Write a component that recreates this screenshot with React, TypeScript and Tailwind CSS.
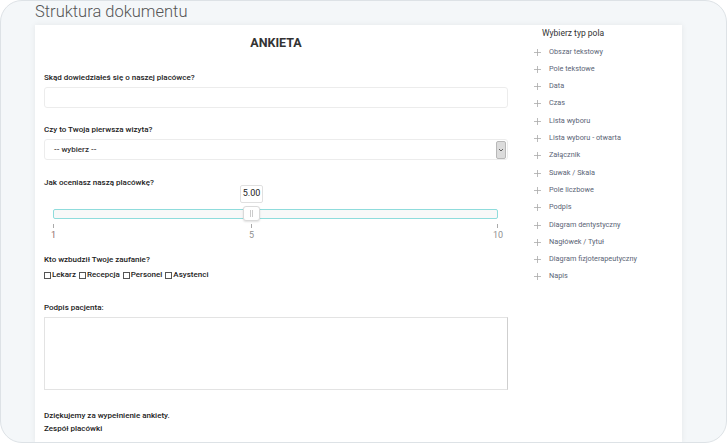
import React from "react";

const items = [
  "Obszar tekstowy",
  "Pole tekstowe",
  "Data",
  "Czas",
  "Lista wyboru",
  "Lista wyboru - otwarta",
  "Załącznik",
  "Suwak / Skala",
  "Pole liczbowe",
  "Podpis",
  "Diagram dentystyczny",
  "Nagłówek / Tytuł",
  "Diagram fizjoterapeutyczny",
  "Napis",
];

function Check({ label }: { label: string }) {
  return (
    <span className="flex items-center">
      <span className="w-[7px] h-[7px] border border-[#555] bg-white mr-[1px]" />
      <span>{label}</span>
    </span>
  );
}

export default function App() {
  return (
    <div
      className="w-[727px] h-[443px] bg-white overflow-hidden"
      style={{ fontFamily: "Roboto, 'Liberation Sans', sans-serif" }}
    >
      <div className="w-[727px] h-[443px] rounded-[22px] border border-[#dde2e6] bg-[#f4f7f9] overflow-hidden flex flex-col pl-[34px]">
        <div className="h-[24px] text-[16.5px] leading-[22px] font-light text-[#555]">
          Struktura dokumentu
        </div>
        <div className="flex-1 w-[647px] bg-white shadow-[0_0_6px_rgba(0,0,0,0.07)] flex pl-[9px]">
          {/* Form */}
          <div className="w-[464px] flex flex-col text-[#222]">
            <div className="mt-[11px] text-center text-[12.5px] leading-[14px] font-bold text-[#333]">
              ANKIETA
            </div>
            <div className="mt-[22px] text-[8px] leading-[12px] font-medium">
              Skąd dowiedziałeś się o naszej placówce?
            </div>
            <div className="mt-[3px] h-[21px] border border-[#ececec] rounded-[3px]" />
            <div className="mt-[16px] text-[8px] leading-[12px] font-medium">
              Czy to Twoja pierwsza wizyta?
            </div>
            <div className="mt-[3px] h-[21px] border border-[#ececec] rounded-[3px] flex items-center justify-between pl-[9px] pr-[1px]">
              <span className="text-[8px] font-medium text-[#333]">-- wybierz --</span>
              <span className="w-[10px] h-[18px] bg-[#dcdcdc] border border-[#b8b8b8] rounded-[2px] flex items-center justify-center">
                <svg width="6" height="4" viewBox="0 0 6 4">
                  <path d="M1 1 L3 3 L5 1" fill="none" stroke="#555" strokeWidth="0.9" />
                </svg>
              </span>
            </div>
            <div className="mt-[17px] text-[8px] leading-[12px] font-medium">
              Jak oceniasz naszą placówkę?
            </div>
            {/* slider */}
            <div className="relative h-[53px] pl-[9px] pr-[10px]">
              <div className="absolute left-[196px] top-[-4px] w-[23px] h-[18px] border border-[#e0e0e0] rounded-[2px] bg-white flex items-center justify-center text-[9px] text-[#222]">
                5.00
              </div>
              <div className="mt-[20px] h-[10px] border border-[#8fdcdc] rounded-[2px] bg-[#f8f8f8]" />
              <div className="absolute left-[199px] top-[17px] w-[17px] h-[15px] border border-[#dadada] rounded-[3px] bg-white shadow-[0_1px_2px_rgba(0,0,0,0.12)] flex items-center justify-center gap-[1px]">
                <span className="w-[1px] h-[7px] bg-[#ccc]" />
                <span className="w-[1px] h-[7px] bg-[#ccc]" />
              </div>
              <div className="relative h-[23px]">
                <div className="absolute left-0 top-[5px] w-[1px] h-[4px] bg-[#aaa]" />
                <div className="absolute left-[198px] top-[5px] w-[1px] h-[4px] bg-[#aaa]" />
                <div className="absolute left-[444px] top-[5px] w-[1px] h-[4px] bg-[#aaa]" />
                <span className="absolute left-[-2px] top-[11px] text-[9px] leading-[11px] text-[#8f6d6d]">1</span>
                <span className="absolute left-[196px] top-[11px] text-[9px] leading-[11px] text-[#8f8f8f]">5</span>
                <span className="absolute left-[440px] top-[11px] text-[9px] leading-[11px] text-[#8f8f8f]">10</span>
              </div>
            </div>
            <div className="mt-[12px] text-[8px] leading-[12px] font-medium">
              Kto wzbudził Twoje zaufanie?
            </div>
            <div className="mt-[3px] flex items-center gap-[3px] text-[8px] leading-[12px] font-medium">
              <Check label="Lekarz" />
              <Check label="Recepcja" />
              <Check label="Personel" />
              <Check label="Asystenci" />
            </div>
            <div className="mt-[21px] text-[8px] leading-[12px] font-medium">
              Podpis pacjenta:
            </div>
            <div className="mt-[3px] h-[73px] border border-[#e3e3e3] border-r-[#cfcfcf]" />
            <div className="mt-[19px] text-[8px] leading-[13px] font-medium">
              Dziękujemy za wypełnienie ankiety.
              <br />
              Zespół placówki
            </div>
          </div>
          {/* Sidebar */}
          <div className="ml-[22px] flex flex-col">
            <div className="mt-[2px] pl-[12px] text-[8.5px] leading-[12px] text-[#333]">
              Wybierz typ pola
            </div>
            <div className="mt-[4.4px] flex flex-col">
              {items.map((it) => (
                <div key={it} className="h-[17.3px] flex items-center">
                  <svg width="7" height="7" viewBox="0 0 7 7" className="ml-[4px]">
                    <path d="M3.5 0 V7 M0 3.5 H7" stroke="#aaa" strokeWidth="0.8" />
                  </svg>
                  <span className="ml-[8px] text-[7.3px] text-[#5b6576]">{it}</span>
                </div>
              ))}
            </div>
          </div>
        </div>
      </div>
    </div>
  );
}
